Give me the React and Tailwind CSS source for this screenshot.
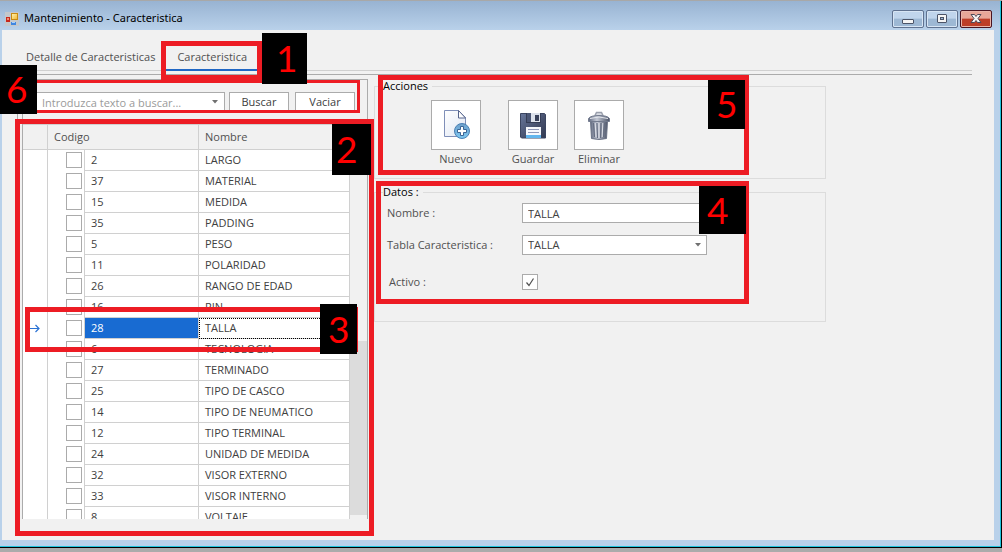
import React from "react";

const ROWS = [
  ["2", "LARGO"],
  ["37", "MATERIAL"],
  ["15", "MEDIDA"],
  ["35", "PADDING"],
  ["5", "PESO"],
  ["11", "POLARIDAD"],
  ["26", "RANGO DE EDAD"],
  ["16", "RIN"],
  ["28", "TALLA"],
  ["6", "TECNOLOGIA"],
  ["27", "TERMINADO"],
  ["25", "TIPO DE CASCO"],
  ["14", "TIPO DE NEUMATICO"],
  ["12", "TIPO TERMINAL"],
  ["24", "UNIDAD DE MEDIDA"],
  ["32", "VISOR EXTERNO"],
  ["33", "VISOR INTERNO"],
  ["8", "VOLTAJE"],
];

function AppIcon() {
  return (
    <svg width="14" height="14" viewBox="0 0 14 14" aria-hidden="true">
      <defs>
        <linearGradient id="gold" x1="0" y1="0" x2="1" y2="1">
          <stop offset="0" stopColor="#fff6b8" />
          <stop offset="1" stopColor="#f2b42c" />
        </linearGradient>
      </defs>
      <rect width="14" height="14" fill="#c4c8cc" />
      <rect x="6.5" y="1.5" width="6" height="6" fill="url(#gold)" stroke="#c98a10" />
      <rect x="1" y="5" width="4" height="5" fill="#c8281c" />
      <rect x="2" y="6" width="2" height="2" fill="#f08a70" />
      <rect x="6" y="10" width="5" height="3" fill="#3f86e0" />
      <rect x="7" y="10" width="3" height="1" fill="#a8d0ff" />
    </svg>
  );
}

function NewIcon() {
  return (
    <svg width="32" height="32" viewBox="0 0 32 32" aria-hidden="true">
      <defs>
        <linearGradient id="paper" x1="0" y1="0" x2="1" y2="1">
          <stop offset="0" stopColor="#ffffff" />
          <stop offset="1" stopColor="#dfe6f3" />
        </linearGradient>
        <linearGradient id="plus" x1="0" y1="0" x2="0" y2="1">
          <stop offset="0" stopColor="#6e9fcb" />
          <stop offset="1" stopColor="#7cc8f2" />
        </linearGradient>
      </defs>
      <path d="M4.500 1.500h14l7 7v19h-21z" fill="url(#paper)" stroke="#7f8fb8" />
      <path d="M18.500 1.500v7.500h7z" fill="#fff" stroke="#56648c" />
      <circle cx="22" cy="22" r="7.500" fill="url(#plus)" stroke="#4a80b4" />
      <path d="M20.500 17.500h3v3h3v3h-3v3h-3v-3h-3v-3h3z" fill="#fff" stroke="#3a6596" strokeWidth="1" />
    </svg>
  );
}

function SaveIcon() {
  return (
    <svg width="32" height="32" viewBox="0 0 32 32" aria-hidden="true">
      <defs>
        <linearGradient id="disk" x1="0" y1="0" x2="1" y2="1">
          <stop offset="0" stopColor="#68779b" />
          <stop offset="0.6" stopColor="#454f6b" />
          <stop offset="1" stopColor="#343b52" />
        </linearGradient>
      </defs>
      <path d="M3.500 4.500h24l1 1v23.500h-24l-1-1z" fill="url(#disk)" stroke="#3b4560" />
      <rect x="9" y="4" width="15" height="10" fill="#353d55" />
      <rect x="10" y="4" width="13" height="9" fill="#dde2ec" />
      <path d="M10 4h4v9h-4z" fill="#4b5674" />
      <rect x="18" y="6" width="4" height="6" fill="#39415a" />
      <rect x="9" y="18" width="15" height="11" fill="#f6f8fc" />
      <rect x="9" y="26" width="15" height="3" fill="#61b6ee" />
      <path d="M11 20.500h11M11 23.500h11" stroke="#8e97b8" />
    </svg>
  );
}

function TrashIcon() {
  return (
    <svg width="32" height="32" viewBox="0 0 32 32" aria-hidden="true">
      <defs>
        <linearGradient id="can" x1="0" y1="0" x2="1" y2="0">
          <stop offset="0" stopColor="#616a80" />
          <stop offset="0.4" stopColor="#c3c8d4" />
          <stop offset="1" stopColor="#4c5468" />
        </linearGradient>
      </defs>
      <path d="M12 6.500l1.500-3h5l1.500 3" fill="#d9dce3" stroke="#9a9fac" strokeWidth="1.500" />
      <path d="M7.500 12h17l-1 17.500q-7.500 2-15 0z" fill="url(#can)" stroke="#6b7386" />
      <path d="M10.500 14l1 14M14 14l.5 15M18 14l-.5 15M21.500 14l-1 14" stroke="#666e82" strokeWidth="1.200" />
      <path d="M12.200 14l.8 14M16 14v15M19.800 14l-.6 14" stroke="#dde0e8" />
      <path d="M5.500 12.500v-3q2-3 10.500-3t10.500 3v3z" fill="url(#can)" stroke="#737b8e" />
      <path d="M7 9.500q9-3 18 0" stroke="#e4e6ec" fill="none" />
    </svg>
  );
}

function WindowButton({ label, close, children }) {
  return (
    <button
      type="button"
      aria-label={label}
      className={
        close
          ? "flex h-[18px] w-8 items-center justify-center rounded-[2px] border border-[#4a1420] bg-linear-to-b from-[#e8a798] from-45% to-[#bd3e28] to-50% shadow-[inset_0_0_0_1px_#e9b4a8]"
          : "flex h-[18px] w-8 items-center justify-center rounded-[2px] border border-[#5f7290] bg-linear-to-b from-[#c0d5ec] from-45% to-[#9db8d4] to-50% shadow-[inset_0_0_0_1px_#d7e5f4]"
      }
    >
      {children}
    </button>
  );
}

function DropButton() {
  return (
    <svg width="6" height="4" viewBox="0 0 6 4" aria-hidden="true">
      <path d="M0 0h6L3 3.500z" fill="#707070" />
    </svg>
  );
}

function Action({ id, label, className, children }) {
  return (
    <div className={"flex w-[50px] flex-col items-center " + className}>
      <button
        type="button"
        aria-labelledby={id}
        className="flex h-[50px] w-[50px] items-center justify-center border border-[#ababab] bg-white"
      >
        {children}
      </button>
      <span id={id} className="mt-px leading-4">{label}</span>
    </div>
  );
}

function Frame({ className }) {
  return <div className={"pointer-events-none absolute border-[#ed1c24] " + className} />;
}

function Marker({ className, children }) {
  return (
    <div
      className={
        "absolute flex items-center bg-black pb-0.5 font-['Lato',sans-serif] text-[37px] leading-none text-[#ff0000] " +
        className
      }
    >
      {children}
    </div>
  );
}

export default function App() {
  return (
    <div className="relative flex min-h-screen flex-col overflow-hidden border-t border-[#a8a8a8] bg-[#ababab] pb-1 font-['Open_Sans','Noto_Sans',sans-serif] text-[11px] text-[#505050]">
      <div className="flex flex-1 flex-col border-r border-b border-black">
        <div className="flex flex-1 flex-col border-r border-b border-[#1fc4dc] bg-[#b9d1ea]">
          <header className="flex h-[29px] items-center gap-[5px] bg-linear-to-b from-[#98b3d2] to-[#b9d1ea] pt-1.5 pr-2 pl-[5px]">
            <AppIcon />
            <h1 className="font-['Noto_Sans',sans-serif] text-[11px] text-black">Mantenimiento - Caracteristica</h1>
            <div className="ml-auto flex gap-0.5">
              <WindowButton label="Minimizar">
                <svg width="12" height="12" viewBox="0 0 12 12">
                  <rect x="0.500" y="6.500" width="11" height="4" rx="0.500" fill="#f4f4f4" stroke="#4b5468" />
                </svg>
              </WindowButton>
              <WindowButton label="Maximizar">
                <svg width="12" height="12" viewBox="0 0 12 12">
                  <rect x="1.500" y="1.500" width="9" height="8" rx="0.500" fill="#f4f4f4" stroke="#4b5468" />
                  <rect x="4.500" y="4.500" width="3" height="2" fill="#9db8d4" stroke="#4b5468" />
                </svg>
              </WindowButton>
              <WindowButton label="Cerrar" close>
                <svg width="12" height="12" viewBox="0 0 12 12">
                  <path d="M1 1.500h3.500l1.500 2 1.500-2H11L8 5.500l3 4H7.500L6 7.500l-1.500 2H1l3-4z" fill="#f4f4f4" stroke="#4f4a58" />
                </svg>
              </WindowButton>
            </div>
          </header>

          <main className="mr-1.5 mb-1.5 ml-0.5 flex-1 bg-[#f1f1f1] pt-3.5 pr-[22px] pb-5 pl-[15px]">
            <nav className="flex h-[27px] border-b border-[#d0d0d0]">
              <a href="#detalle" className="pt-1 pr-[11px] pl-[9px] leading-[18px]">Detalle de Caracteristicas</a>
              <a href="#caracteristica" aria-current="page" className="h-[27px] border-b-2 border-[#2067c4] px-[11px] pt-1 leading-[18px]">
                Caracteristica
              </a>
            </nav>

            <div className="mt-[3px] flex items-start gap-1.5 border-t border-l border-[#ababab] pt-1 pl-1">
              <section className="w-[346px] shrink-0 border-x border-t border-[#ababab] pt-3">
                <form className="flex pl-3" onSubmit={(e) => e.preventDefault()}>
                  <div className="flex h-5 w-[190px] items-center border border-[#ababab] bg-white pr-1.5">
                    <input
                      type="text"
                      aria-label="Buscar texto"
                      placeholder="Introduzca texto a buscar..."
                      className="h-full min-w-0 flex-1 bg-transparent pl-1.5 outline-none placeholder:text-[#9a9a9a]"
                    />
                    <DropButton />
                  </div>
                  <button type="submit" className="ml-1 h-5 w-[60px] border border-[#ababab] bg-white text-[#404040]">Buscar</button>
                  <button type="reset" className="ml-1.5 h-5 w-[60px] border border-[#ababab] bg-white text-[#404040]">Vaciar</button>
                </form>

                <div className="mt-3 flex h-[395px] overflow-hidden border-t border-[#d0d0d0]">
                  <table className="w-full table-fixed border-separate border-spacing-0 self-start text-[#404040]">
                    <colgroup>
                      <col className="w-[25px]" />
                      <col className="w-[37px]" />
                      <col className="w-[114px]" />
                      <col />
                    </colgroup>
                    <thead>
                      <tr className="h-[25px] text-left text-[#505050]">
                        <th className="border-r border-b border-[#d0d0d0] p-0" aria-label="Fila" />
                        <th colSpan={2} className="border-r border-b border-[#d0d0d0] py-0 pr-0 pl-1.5 font-normal">Codigo</th>
                        <th className="border-b border-[#d0d0d0] py-0 pr-0 pl-1.5 font-normal">Nombre</th>
                      </tr>
                    </thead>
                    <tbody className="bg-white">
                      {ROWS.map(([code, name]) => {
                        const active = code === "28";
                        return (
                          <tr key={code} className="h-[21px]">
                            <td className="border-r border-[#d0d0d0] pt-0 pr-0 pb-px pl-1.5">
                              {active && (
                                <svg width="12" height="10" viewBox="0 0 12 10" className="block" aria-hidden="true">
                                  <path d="M0 5.500h10M6.500 2L10 5.500 6.500 9" fill="none" stroke="#2a72d4" strokeWidth="1.200" />
                                </svg>
                              )}
                            </td>
                            <td className="border-r border-[#d0d0d0] p-0 pb-px">
                              <input
                                type="checkbox"
                                aria-label={"Seleccionar " + name}
                                className="ml-[18px] block h-4 w-4 appearance-none border border-[#ababab] bg-white"
                              />
                            </td>
                            <td
                              className={
                                active
                                  ? "border-r border-b border-[#d0d0d0] bg-[#186bd2] py-0 pr-0 pl-1.5 text-white"
                                  : "border-r border-b border-[#d0d0d0] py-0 pr-0 pl-1.5"
                              }
                            >
                              {code}
                            </td>
                            <td
                              className={
                                active
                                  ? "border-r border-b border-[#d0d0d0] py-0 pr-0 pl-1.5 outline-1 -outline-offset-1 outline-black outline-dotted"
                                  : "border-r border-b border-[#d0d0d0] py-0 pr-0 pl-1.5"
                              }
                            >
                              {name}
                            </td>
                          </tr>
                        );
                      })}
                    </tbody>
                  </table>
                  <div className="flex w-[17px] shrink-0 flex-col justify-end pb-1">
                    <div className="h-[174px] bg-[#dcdcdc]" />
                  </div>
                </div>
              </section>

              <div className="flex min-w-0 max-w-[452px] flex-1 flex-col gap-1.5">
                <fieldset className="h-[100px] border border-[#dcdcdc] pl-2">
                  <legend className="pr-1 leading-[14px] text-black">Acciones</legend>
                  <div className="flex pt-[7px]">
                    <Action id="nuevo" label="Nuevo" className="ml-12"><NewIcon /></Action>
                    <Action id="guardar" label="Guardar" className="ml-[27px]"><SaveIcon /></Action>
                    <Action id="eliminar" label="Eliminar" className="ml-4"><TrashIcon /></Action>
                  </div>
                </fieldset>

                <fieldset className="h-[137px] border border-[#dcdcdc] pl-2">
                  <legend className="pr-1 leading-[14px] text-black">Datos :</legend>
                  <div className="grid grid-cols-[135px_185px] items-center gap-y-3 pt-1 pl-1">
                    <label htmlFor="nombre">Nombre :</label>
                    <input id="nombre" type="text" defaultValue="TALLA" className="h-5 border border-[#ababab] bg-white pl-[5px] text-[#404040]" />
                    <label htmlFor="tabla">Tabla Caracteristica :</label>
                    <div className="grid items-center">
                      <select id="tabla" className="col-start-1 row-start-1 h-5 appearance-none border border-[#ababab] bg-white pl-[5px] text-[#404040]">
                        <option>TALLA</option>
                      </select>
                      <span className="pointer-events-none col-start-1 row-start-1 mr-1.5 justify-self-end"><DropButton /></span>
                    </div>
                    <label htmlFor="activo" className="mt-[7px] pl-0.5">Activo :</label>
                    <div className="mt-[7px] grid w-4 items-center justify-items-center">
                      <input id="activo" type="checkbox" defaultChecked className="col-start-1 row-start-1 h-4 w-4 appearance-none border border-[#ababab] bg-white" />
                      <svg width="10" height="10" viewBox="0 0 10 10" className="pointer-events-none col-start-1 row-start-1" aria-hidden="true">
                        <path d="M1.500 5.500L4 8.500 8.500 1.500" fill="none" stroke="#505050" strokeWidth="1.200" />
                      </svg>
                    </div>
                  </div>
                </fieldset>
              </div>
            </div>
          </main>
        </div>
      </div>

      <Frame className="top-[40px] left-[161px] h-[39px] w-[101px] border-[5px]" />
      <Frame className="top-[79px] left-[20px] h-[33px] w-[340px] border-[3px]" />
      <Frame className="top-[118px] left-[15px] h-[417px] w-[359px] border-[5px]" />
      <Frame className="top-[306px] left-[25px] h-[45px] w-[333px] border-[5px]" />
      <Frame className="top-[180px] left-[376px] h-[123px] w-[373px] border-[5px]" />
      <Frame className="top-[74px] left-[378px] h-[100px] w-[371px] border-[5px]" />
      <Marker className="top-[32px] left-[262px] h-[51px] w-[45px] pl-3.5">1</Marker>
      <Marker className="top-[123px] left-[332px] h-[51px] w-[39px] pl-1">2</Marker>
      <Marker className="top-[303px] left-[320px] h-[50px] w-[37px] pl-2">3</Marker>
      <Marker className="top-[185px] left-[699px] h-[48px] w-[47px] pl-2">4</Marker>
      <Marker className="top-[79px] left-[708px] h-[49px] w-[37px] pl-2">5</Marker>
      <Marker className="top-[64px] left-0 h-[49px] w-[37px] pl-1.5">6</Marker>
    </div>
  );
}
